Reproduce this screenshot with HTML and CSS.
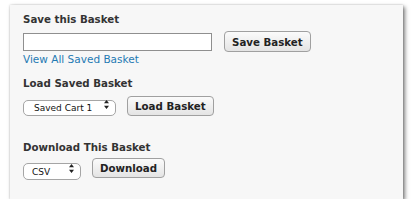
FILE: index.html
```html
<!DOCTYPE html>
<html lang="en">
  <head>
    <title>Basket</title>
    <meta charset="utf-8" />
    <link rel="stylesheet" href="styles.css">
  </head>
  <body>
    <div class="panel">
      <h4 class="label">Save this Basket</h4>
      <div class="row first">
        <input type="text" class="basketName" />
        <input type="button" class="btn" value="Save Basket" />
      </div>
      <a href="#" class="viewAll">View All Saved Basket</a>

      <h4 class="label load">Load Saved Basket</h4>
      <div class="row">
        <span class="selectWrap cart">
          <select>
            <option>Saved Cart 1</option>
            <option>Saved Cart 2</option>
          </select>
          <svg class="arrows" width="5" height="9" viewBox="0 0 5 9">
            <path d="M2.5 0 L5 3.3 L0 3.3 Z M2.5 9 L5 5.7 L0 5.7 Z" fill="#222" />
          </svg>
        </span>
        <input type="button" class="btn" value="Load Basket" />
      </div>

      <h4 class="label download">Download This Basket</h4>
      <div class="row">
        <span class="selectWrap format">
          <select>
            <option>CSV</option>
            <option>XLS</option>
          </select>
          <svg class="arrows" width="5" height="9" viewBox="0 0 5 9">
            <path d="M2.5 0 L5 3.3 L0 3.3 Z M2.5 9 L5 5.7 L0 5.7 Z" fill="#222" />
          </svg>
        </span>
        <input type="button" class="btn" value="Download" />
      </div>
    </div>
  </body>
</html>
```
FILE: styles.css
```css
body {
  margin: 0;
  background-color: white;
  font-family: "DejaVu Sans", Verdana, sans-serif;
}

.panel {
  margin: 5px 0 0 10px;
  width: 393px;
  height: 194px;
  box-sizing: border-box;
  padding: 8px 13px 0 13px;
  background-color: #f7f7f7;
  box-shadow: 2px 2px 4px 0 rgba(0, 0, 0, 0.5), 0 0 2px rgba(0, 0, 0, 0.2);
}

.label {
  margin: 0;
  font-size: 10.25px;
  line-height: 13px;
  font-weight: bold;
  color: #333;
}
.label.load {
  margin-top: 11px;
}
.label.download {
  margin-top: 25px;
}

.row {
  display: flex;
  align-items: center;
  gap: 11px;
  height: 20px;
  margin-top: 6px;
}
.row.first {
  height: 21px;
  margin-top: 5px;
  gap: 12px;
}
.label.download + .row {
  margin-top: 4px;
}

.basketName {
  width: 189px;
  height: 18px;
  box-sizing: border-box;
  margin: 0;
  border: 1px solid #8f8f8f;
  background-color: white;
  padding: 0 3px;
}

.btn {
  margin: 0;
  height: 20px;
  padding: 0 7px;
  border: 1px solid #a0a0a0;
  border-radius: 4px;
  background: linear-gradient(#fbfbfb, #e4e4e4);
  font-family: "DejaVu Sans", Verdana, sans-serif;
  font-size: 10.25px;
  font-weight: bold;
  color: #222;
  cursor: pointer;
}
.row.first .btn {
  height: 21px;
}

.viewAll {
  display: block;
  margin-top: 1px;
  font-size: 10.5px;
  line-height: 13px;
  color: #1f7ab3;
  text-decoration: none;
}

.selectWrap {
  position: relative;
  display: inline-block;
}
.selectWrap select {
  appearance: none;
  -webkit-appearance: none;
  margin: 0;
  height: 16px;
  box-sizing: border-box;
  padding: 0 0 0 10px;
  border: 1px solid #a5a5a5;
  border-radius: 5px;
  background-color: white;
  font-family: "DejaVu Sans", Verdana, sans-serif;
  font-size: 9px;
  color: #111;
}
.selectWrap.cart select {
  width: 93px;
}
.selectWrap.format {
  height: 17px;
}
.selectWrap.format select {
  width: 58px;
  height: 17px;
  padding-left: 8px;
}
.arrows {
  position: absolute;
  right: 7px;
  top: 3.5px;
  pointer-events: none;
}
.selectWrap.format .arrows {
  top: 4px;
}
```
